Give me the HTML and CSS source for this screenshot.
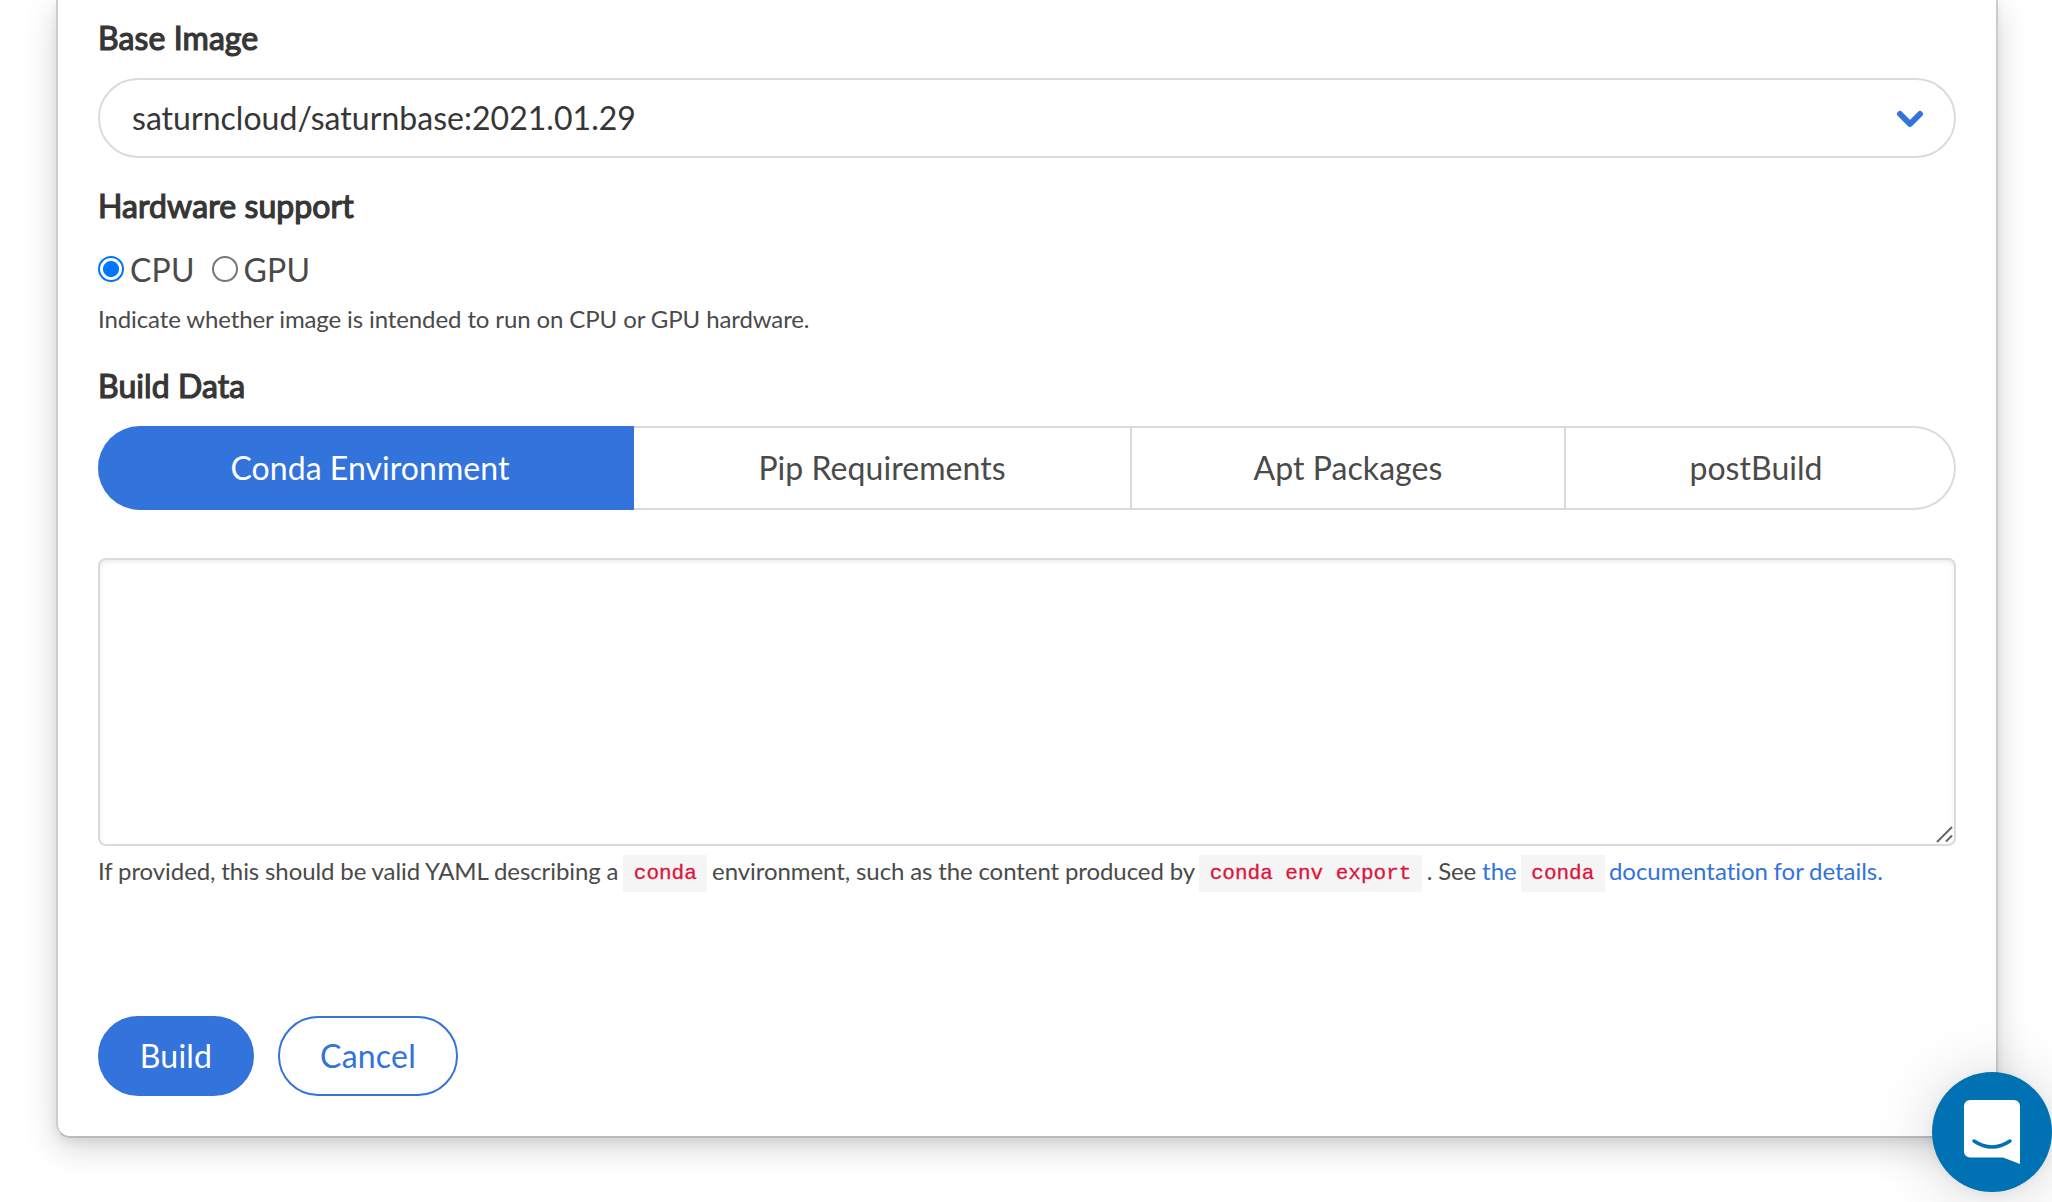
FILE: index.html
```html
<!DOCTYPE html>
<html lang="en">
<head>
<meta charset="utf-8">
<title>Build image</title>
<link rel="stylesheet" href="styles.css">
</head>
<body>
<form class="card">
  <h2 class="label">Base Image</h2>
  <div class="select"><span>saturncloud/saturnbase:2021.01.29</span>
    <svg class="chevron" viewBox="0 0 28 18"><path d="M4 4l10 10 10-10"/></svg>
  </div>
  <h2 class="label label-hardware">Hardware support</h2>
  <div class="radios">
    <label class="option"><span class="radio checked"></span><span>CPU</span></label>
    <label class="option"><span class="radio"></span><span>GPU</span></label>
  </div>
  <p class="help">Indicate whether image is intended to run on CPU or GPU hardware.</p>
  <h2 class="label label-build">Build Data</h2>
  <div class="tabs">
    <div class="tab active">Conda Environment</div>
    <div class="tab">Pip Requirements</div>
    <div class="tab">Apt Packages</div>
    <div class="tab">postBuild</div>
  </div>
  <div class="editor"><svg class="grip" viewBox="0 0 18 18"><path d="M1 16L16 1M10 15.500L16 9.500"/></svg></div>
  <p class="help conda-help">If provided, this should be valid YAML describing a <code>conda</code> environment, such as the content produced by <code>conda env export</code> . See <a>the <code>conda</code> documentation for details.</a></p>
  <div class="actions">
    <button type="button" class="button primary">Build</button>
    <button type="button" class="button">Cancel</button>
  </div>
</form>
<div class="chat"><svg viewBox="0 0 56 64"><path class="bubble" d="M6 0h44a6 6 0 0 1 6 6v58l-17-6.500H6a6 6 0 0 1-6-6V6a6 6 0 0 1 6-6z"/><path class="smile" d="M10 41q18 12 36 0"/></svg></div>
</body>
</html>
```
FILE: styles.css
```css
* { box-sizing: border-box; }
body { margin: 0; height: 1202px; overflow: hidden; background: #fff; color: #363636; font-family: Lato, sans-serif; }
.card { width: 1942px; height: 1138px; margin-left: 56px; padding: 16px 40px 0; border: 2px solid #ccc; border-bottom-color: #bbb; border-top: 0; border-radius: 0 0 14px 14px; box-shadow: 0 10px 32px rgba(0,0,0,.17), 0 4px 8px rgba(0,0,0,.06); }
.label { margin: 0; font-size: 32px; line-height: 44px; font-weight: 400; letter-spacing: .08px; -webkit-text-stroke: 1.2px #363636; }
.select { display: flex; align-items: center; justify-content: space-between; height: 80px; margin-top: 18px; padding: 0 29px 2px 32px; border: 2px solid #dbdbdb; border-radius: 40px; font-size: 32px; letter-spacing: .03px; }
.chevron { width: 28px; height: 18px; margin: 3px 1px 0 0; fill: none; stroke: #3273dc; stroke-width: 6; stroke-linecap: round; stroke-linejoin: round; }
.label-hardware { margin-top: 26px; }
.radios { display: flex; gap: 17px; height: 48px; margin-top: 17px; font-size: 32px; letter-spacing: .15px; color: #4a4a4a; }
.option { display: flex; align-items: center; gap: 6px; }
.radio { width: 26px; height: 26px; border: 2px solid #767676; border-radius: 50%; }
.checked { border-color: #0075ff; background: radial-gradient(circle, #0075ff 7.5px, #fff 8.5px); }
.help { margin: 8px 0 0; font-size: 24px; line-height: 36px; letter-spacing: -.11px; color: #4a4a4a; white-space: nowrap; }
.label-build { margin-top: 27px; }
.tabs { display: grid; grid-template-columns: 536px 498px 434px 390px; height: 84px; margin-top: 18px; border-radius: 42px; }
.tab { display: flex; align-items: center; justify-content: center; padding-bottom: 2px; border: 2px solid #dbdbdb; border-left: 0; color: #4a4a4a; font-size: 32px; letter-spacing: .05px; }
.tab.active { padding-left: 10px; background: #3273dc; border-color: #3273dc; color: #fff; border-radius: 42px 0 0 42px; }
.tab:last-child { padding-right: 8px; border-radius: 0 42px 42px 0; }
.editor { display: flex; align-items: flex-end; justify-content: flex-end; height: 288px; margin-top: 48px; border: 2px solid #dbdbdb; border-radius: 8px; box-shadow: inset 0 2px 4px rgba(0,0,0,.08); }
.grip { width: 18px; height: 18px; fill: none; stroke: #666; stroke-width: 2; }
.conda-help { margin-top: 7px; letter-spacing: -.07px; word-spacing: -.25px; }
code { margin: 0 -1px; padding: 7px 10.5px; vertical-align: 1px; background: #f5f5f5; color: #dc143c; font: 21px/1 "Courier New", "Liberation Mono", monospace; letter-spacing: 0; word-spacing: 0; -webkit-text-stroke: .3px #dc143c; }
a { color: #3273dc; letter-spacing: -.02px; word-spacing: -.5px; }
a code { margin: 0 -1.5px; }
.actions { display: flex; gap: 24px; margin-top: 127px; }
.button { width: 180px; height: 80px; padding: 0 0 2px; border: 2px solid #3273dc; border-radius: 40px; background: #fff; color: #3273dc; font: 32px Lato, sans-serif; letter-spacing: .2px; }
.primary { width: 156px; background: #3273dc; color: #fff; }
.chat { position: absolute; left: 1932px; top: 1072px; display: flex; align-items: center; justify-content: center; width: 120px; height: 120px; border-radius: 50%; background: #0071b2; box-shadow: 0 2px 12px rgba(0,0,0,.06), 0 4px 64px rgba(0,0,0,.16); }
.chat svg { width: 56px; height: 64px; }
.bubble { fill: #fff; }
.smile { fill: none; stroke: #0071b2; stroke-width: 3.5; stroke-linecap: round; }
```
